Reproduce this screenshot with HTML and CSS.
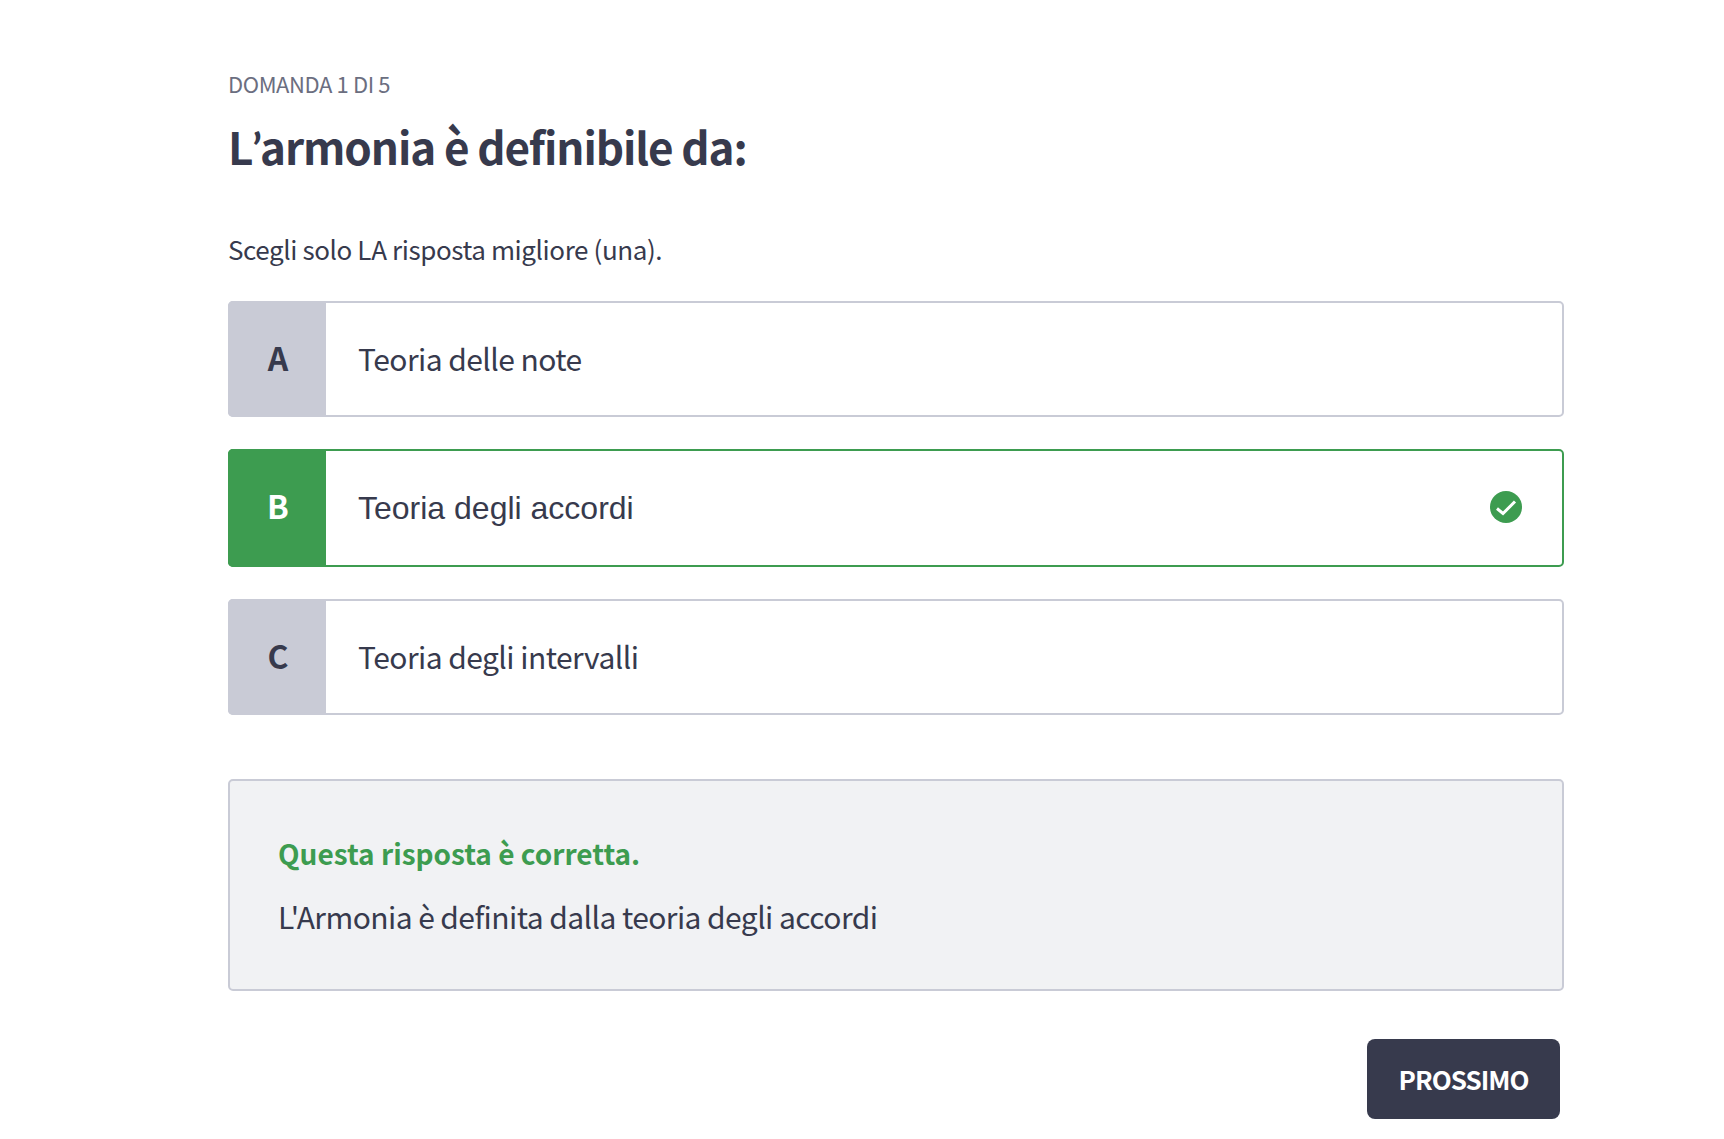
FILE: index.html
```html
<!DOCTYPE html>
<html lang="it">
<head>
<meta charset="utf-8">
<title>Domanda 1 di 5</title>
<link rel="stylesheet" href="styles.css">
</head>
<body>
<main class="quiz">
  <div class="progress">DOMANDA 1 DI 5</div>
  <h1 class="question">L<span class="apos">’</span>armonia è definibile da:</h1>
  <p class="hint">Scegli solo LA risposta migliore (una).</p>
  <div class="options">
    <div class="option">
      <div class="letter">A</div>
      <div class="answer">Teoria delle note</div>
    </div>
    <div class="option correct">
      <div class="letter">B</div>
      <div class="answer">Teoria degli accordi</div>
      <svg class="check" width="32" height="32" viewBox="0 0 32 32" aria-hidden="true">
        <circle cx="16" cy="16" r="16" fill="#3d9c50"/>
        <path d="M7 17.5l6 5L25 10.5" fill="none" stroke="#fff" stroke-width="3"/>
      </svg>
    </div>
    <div class="option">
      <div class="letter">C</div>
      <div class="answer">Teoria degli intervalli</div>
    </div>
  </div>
  <section class="feedback">
    <div class="feedback-title">Questa risposta è corretta.</div>
    <div class="feedback-text">L'Armonia è definita dalla teoria degli accordi</div>
  </section>
  <div class="actions">
    <button class="next" type="button">PROSSIMO</button>
  </div>
</main>
</body>
</html>
```
FILE: styles.css
```css
* { box-sizing: border-box; }
html, body { margin: 0; background: #fff; }
body {
  font-family: "Noto Sans CJK SC", "Noto Sans", sans-serif;
  font-variant-east-asian: proportional-width;
  color: #373a4d;
  height: 1139px;
  overflow: hidden;
}
.quiz {
  width: 1336px;
  margin-left: 228px;
  padding-top: 66px;
}
.progress {
  font-size: 22px;
  line-height: 34px;
  color: #6b6e80;
  letter-spacing: -0.4px;
}
.question {
  margin: 18px 0 0;
  height: 56px;
  font-size: 44px;
  line-height: 56px;
  font-weight: 700;
  letter-spacing: -1.1px;
}
.apos {
  font-family: "Lato", sans-serif;
  letter-spacing: -2px;
}
.hint {
  margin: 55px 0 0;
  font-size: 26px;
  line-height: 40px;
  letter-spacing: -0.4px;
}
.options {
  margin-top: 32px;
  display: flex;
  flex-direction: column;
  gap: 32px;
}
.option {
  display: flex;
  align-items: center;
  height: 116px;
  border: 2px solid #c9cbd6;
  border-radius: 5px;
  background: #fff;
}
.letter {
  flex: none;
  align-self: stretch;
  width: 98px;
  margin: -2px 0 -2px -2px;
  padding: 0 0 5px 2px;
  border-radius: 5px 0 0 5px;
  background: #c9cbd6;
  display: flex;
  align-items: center;
  justify-content: center;
  font-size: 32px;
  font-weight: 700;
}
.answer {
  flex: 1;
  padding: 0 0 2px 32px;
  font-size: 30px;
  line-height: 44px;
  letter-spacing: -0.55px;
}
.correct {
  height: 118px;
  border-color: #3d9c50;
}
.correct .letter {
  padding-bottom: 7px;
  background: #3d9c50;
  color: #fff;
}
.correct .answer {
  font-family: "Liberation Sans", Arial, sans-serif;
  font-size: 32px;
  letter-spacing: 0;
  padding-bottom: 0;
}
.check {
  flex: none;
  margin: 0 40px 2px 0;
}
.feedback {
  margin-top: 64px;
  height: 212px;
  padding: 50px 48px 0;
  border: 2px solid #c9cbd6;
  border-radius: 5px;
  background: #f1f2f4;
}
.feedback-title {
  font-size: 28px;
  line-height: 44px;
  font-weight: 700;
  color: #3d9c50;
}
.feedback-text {
  margin-top: 19px;
  font-size: 30px;
  line-height: 44px;
  letter-spacing: -0.57px;
}
.actions {
  display: flex;
  justify-content: flex-end;
  margin-top: 48px;
  padding-right: 4px;
}
.next {
  width: 193px;
  height: 80px;
  padding: 0 0 2px;
  border: 0;
  border-radius: 8px;
  background: #373a4d;
  color: #fff;
  font-family: inherit;
  font-variant-east-asian: inherit;
  font-size: 26px;
  letter-spacing: -1px;
  font-weight: 700;
}
```
